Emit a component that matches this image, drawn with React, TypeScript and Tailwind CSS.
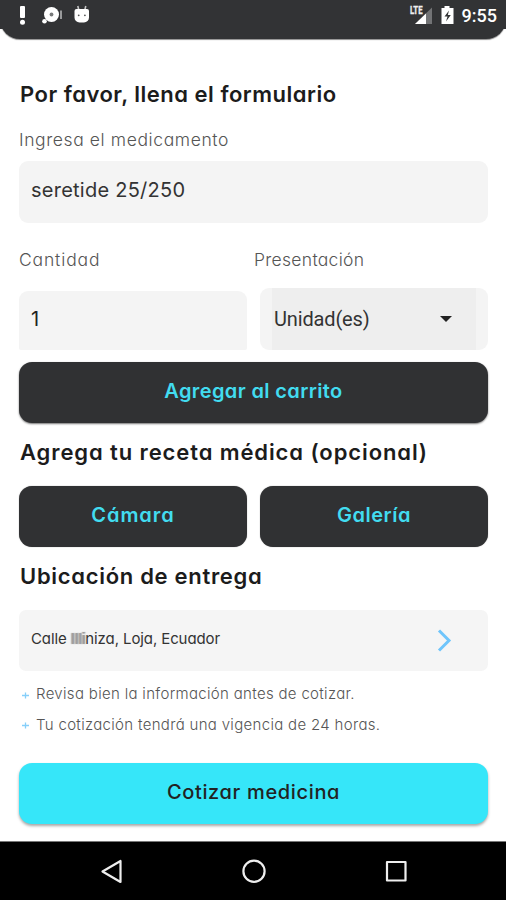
import type { ReactNode } from 'react';

const NOTES = [
  'Revisa bien la información antes de cotizar.',
  'Tu cotización tendrá una vigencia de 24 horas.',
];

function StatusBar() {
  return (
    <div className="relative h-[39px] shrink-0">
      <div className="h-[39px] rounded-b-[20px] bg-[#323335] shadow-[0_1px_1px_rgba(0,0,0,0.45)]" />
      <div className="absolute inset-x-0 top-0 flex h-[29px] items-start bg-[#323335]">
        <svg width="100" height="28" viewBox="0 0 100 28" fill="#fff">
          <rect x="20" y="6" width="5" height="12" rx="1" />
          <circle cx="22.5" cy="22.3" r="2.5" />
          <circle cx="51.5" cy="14.5" r="7.5" />
          <circle cx="51.5" cy="14.5" r="1.9" fill="#77797a" />
          <circle cx="44.5" cy="21.3" r="2.3" />
          <path d="M61 10.5v8.5" stroke="#a5a6a7" strokeWidth="1.8" fill="none" />
          <path d="M77.8 6l1 4M85.8 6l-1 4" stroke="#c4c4c4" strokeWidth="1.6" />
          <path d="M74.5 11q0-2 2-2H87q2 0 2 2v6.5a5 5 0 0 1-5 5h-4.500a5 5 0 0 1-5-5z" />
          <circle cx="78.7" cy="15.3" r="0.9" fill="#555" />
          <circle cx="84.9" cy="15.3" r="0.9" fill="#555" />
        </svg>
        <div className="ml-auto flex items-start">
          <svg width="50" height="28" viewBox="0 0 50 28">
            <path d="M24 7.5v16.5H7z" fill="#727375" />
            <path d="M18 13.5v10.5H7z" fill="#fff" />
            <text x="2" y="14" fontSize="10.5" fontWeight="700" fontFamily="Roboto, sans-serif" fill="#eee" stroke="#eee" strokeWidth="0.3" textLength="12.5" lengthAdjust="spacingAndGlyphs">LTE</text>
            <path d="M36.5 6h5v2h4v16h-12V8h3z" fill="#fff" />
            <path d="M41 10.5l-4.500 6h3L38 21.5l4.800-6.500h-3z" fill="#323335" />
          </svg>
          <span className="mr-[9px] ml-[4px] mt-[7px] font-[Roboto] text-[18px] leading-none font-medium text-white">9:55</span>
        </div>
      </div>
    </div>
  );
}

function Heading({ children, className }: { children: ReactNode; className: string }) {
  return <h2 className={`h-[30px] pl-px text-[22px] leading-[30px] font-semibold whitespace-nowrap text-[#1c1c1c] ${className}`}>{children}</h2>;
}

function DarkButton({ children, className }: { children: ReactNode; className: string }) {
  return (
    <button className={`flex h-[61px] items-center justify-center rounded-[13px] bg-[#303133] pb-1 text-[20px] font-semibold text-[#42dcf0] ${className}`}>
      {children}
    </button>
  );
}

function NavBar() {
  return (
    <div className="mt-auto h-[59px] shrink-0 border-t border-[#777] bg-black">
      <svg width="506" height="58" viewBox="0 0 506 58" fill="none" stroke="#eee" strokeWidth="2.2" strokeLinejoin="round">
        <path d="M120.5 19v21L102.5 29.5z" />
        <circle cx="254" cy="29.3" r="10.6" />
        <rect x="387" y="20" width="18.5" height="18.5" />
      </svg>
    </div>
  );
}

export default function App() {
  return (
    <div className="flex h-[900px] w-[506px] flex-col overflow-hidden bg-white font-[Inter,sans-serif] [font-feature-settings:'cv11']">
      <StatusBar />

      <div className="flex flex-col pt-10 pr-[18px] pl-[19px]">
        <Heading className="tracking-[0.5px]">Por favor, llena el formulario</Heading>

        <label className="mt-4 h-7 text-[17.5px] leading-[29px] font-light tracking-[0.6px] text-[#555]">Ingresa el medicamento</label>
        <div className="mt-2 flex h-[62px] items-center rounded-[9px] bg-[#f4f4f4] px-3 pb-1 text-[20px] tracking-[0.25px] text-[#333]">
          seretide 25/250
        </div>

        <div className="mt-[23px] flex h-7 text-[17.5px] leading-7 font-light text-[#555]">
          <label className="w-[235px] tracking-[0.85px]">Cantidad</label>
          <label className="tracking-[0.3px]">Presentación</label>
        </div>

        <div className="mt-[14px] flex h-[62px] items-end gap-[13px]">
          <div className="flex h-[59px] w-[228px] items-center rounded-t-[9px] rounded-b-[2px] bg-[#f4f4f4] px-3 pb-[3px] text-[20px] text-[#222]">1</div>
          <div className="flex h-[62px] flex-1 rounded-[9px] bg-[#f4f4f4] px-3">
            <div className="flex flex-1 items-center justify-between bg-[#eee] pr-6 pl-[2px] font-[Roboto] text-[20px] tracking-[-0.15px] text-[#333]">
              Unidad(es)
              <svg width="12" height="6" viewBox="0 0 12 6">
                <path d="M0 0h12L6 6z" fill="#222" />
              </svg>
            </div>
          </div>
        </div>

        <DarkButton className="mt-3 tracking-[0.38px] shadow-[0_1px_2px_rgba(0,0,0,0.55)]">Agregar al carrito</DarkButton>

        <Heading className="mt-[14px] tracking-[0.9px]">Agrega tu receta médica (opcional)</Heading>
        <div className="mt-[19px] flex gap-[13px]">
          <DarkButton className="flex-1 tracking-[0.95px] shadow-[0_0_1px_rgba(0,0,0,0.5)]">Cámara</DarkButton>
          <DarkButton className="flex-1 tracking-[0.5px] shadow-[0_0_1px_rgba(0,0,0,0.5)]">Galería</DarkButton>
        </div>

        <Heading className="mt-[14px] tracking-[0.7px]">Ubicación de entrega</Heading>
        <div className="mt-[19px] flex h-[61px] items-center justify-between rounded-[7px] bg-[#f5f5f5] pr-9 pl-3">
          <span className="pb-[3px] text-[15px] tracking-[-0.1px] text-[#333]">
            Calle <span className="text-[#999] [text-shadow:1px_0_1px_#999,-1px_0_1px_#aaa]">Illi</span>niza, Loja, Ecuador
          </span>
          <svg width="15" height="24" viewBox="0 0 15 24" fill="none" stroke="#6fc5fb" strokeWidth="3">
            <path d="M2 1.5l10 10L2 21.5" />
          </svg>
        </div>

        <ul className="mt-2">
          {NOTES.map(note => (
            <li key={note} className="flex h-[30.5px] items-center text-[15px] font-light tracking-[0.32px] text-[#555]">
              <svg className="mt-[2px] mr-[6px] ml-[2px]" width="9" height="9" viewBox="0 0 9 9" stroke="#86cffa" strokeWidth="1.3">
                <path d="M4.5 1.5v6M1 4.5h7" />
              </svg>
              {note}
            </li>
          ))}
        </ul>

        <button className="mt-[23px] flex h-[61px] items-center justify-center rounded-[13px] bg-[#36e6f9] pb-1 text-[20px] font-medium tracking-[0.65px] text-[#222] shadow-[0_2px_3px_rgba(0,0,0,0.35)]">
          Cotizar medicina
        </button>
      </div>

      <NavBar />
    </div>
  );
}
